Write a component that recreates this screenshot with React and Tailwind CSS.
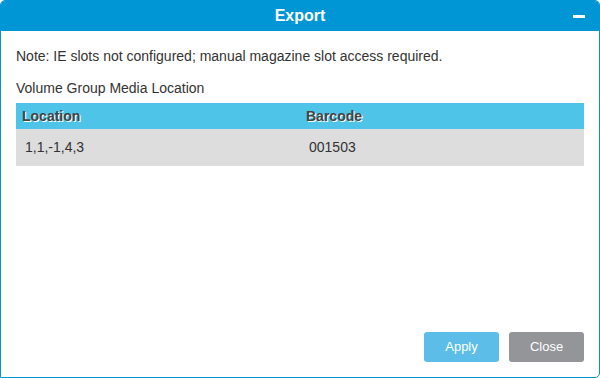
import React from 'react'

const rows = [{ location: '1,1,-1,4,3', barcode: '001503' }]

function App() {
    return (
        <div className="w-[600px] h-[378px] bg-white" style={{ fontFamily: '"Liberation Sans", Arial, sans-serif' }}>
            <div className="w-full h-full flex flex-col border border-[#0095d6] rounded-t-[5px] rounded-br-[5px] overflow-hidden">
                <div className="h-[30px] shrink-0 bg-[#0096d6] flex items-center justify-center relative">
                    <h1 className="text-white font-bold text-[16px]">Export</h1>
                    <span className="absolute right-[14px] top-[14px] w-[12px] h-[3px] bg-white"></span>
                </div>
                <div className="flex-1 flex flex-col px-[15px] pt-[17px] pb-[15px] text-[14px] text-[#333]">
                    <p className="leading-[16px]">Note: IE slots not configured; manual magazine slot access required.</p>
                    <p className="leading-[16px] mt-[16px]">Volume Group Media Location</p>
                    <table className="w-full mt-[7px] text-left table-fixed">
                        <thead>
                            <tr className="bg-[#4fc4e9] h-[26px]">
                                <th className="pl-[6px] font-bold text-[#444] [text-shadow:1px_1px_0_#fff]">Location</th>
                                <th className="pl-[6px] font-bold text-[#444] [text-shadow:1px_1px_0_#fff]">Barcode</th>
                            </tr>
                        </thead>
                        <tbody>
                            {rows.map((row) => {
                                return (
                                    <tr key={row.barcode} className="bg-[#dddddd] h-[37px]">
                                        <td className="pl-[9px]">{row.location}</td>
                                        <td className="pl-[9px]">{row.barcode}</td>
                                    </tr>
                                )
                            })}
                        </tbody>
                    </table>
                    <div className="mt-auto flex justify-end gap-[10px]">
                        <button className="w-[75px] h-[30px] rounded-[3px] bg-[#5bbde8] text-white text-[13px]">Apply</button>
                        <button className="w-[75px] h-[30px] rounded-[3px] bg-[#939598] text-white text-[13px]">Close</button>
                    </div>
                </div>
            </div>
        </div>
    )
}

export default App
